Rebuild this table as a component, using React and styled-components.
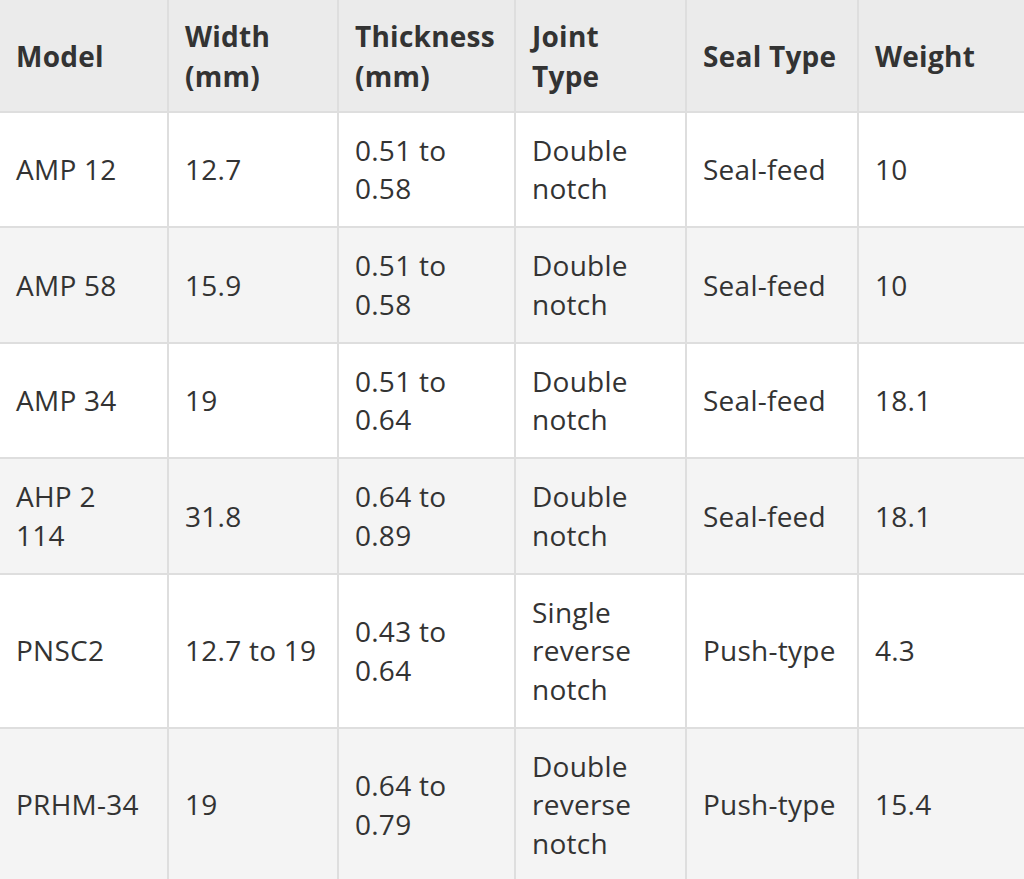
import React from "react";
import styled, { createGlobalStyle } from "styled-components";

const Global = createGlobalStyle`
  html, body { margin: 0; padding: 0; background: #ffffff; }
  body { font-family: "Open Sans", "Liberation Sans", sans-serif; color: #333333; }
`;

const Table = styled.table`
  border-collapse: collapse;
  table-layout: fixed;
  width: 1024px;
  font-size: 28px;
  letter-spacing: 0.25px;
  line-height: 38.5px;
  color: #333333;
`;

const HeadCell = styled.th`
  background: #ebebeb;
  font-weight: 700;
  text-align: left;
  vertical-align: middle;
  line-height: 40px;
  padding: 15.5px 16px 15px;
  border-bottom: 2px solid #dedede;
  border-left: ${(p) => (p.$first ? "none" : "2px solid #dedede")};
`;

const Row = styled.tr`
  background: ${(p) => (p.$striped ? "#f4f4f4" : "#ffffff")};
`;

const Cell = styled.td`
  text-align: left;
  vertical-align: middle;
  padding: 18.25px 16px;
  border-bottom: 2px solid #dedede;
  border-left: ${(p) => (p.$first ? "none" : "2px solid #dedede")};
`;

const widths = [168, 170, 177, 171, 172, 166];
const headers = ["Model", "Width (mm)", "Thickness (mm)", "Joint Type", "Seal Type", "Weight"];
const rows = [
  ["AMP 12", "12.7", "0.51 to 0.58", "Double notch", "Seal-feed", "10"],
  ["AMP 58", "15.9", "0.51 to 0.58", "Double notch", "Seal-feed", "10"],
  ["AMP 34", "19", "0.51 to 0.64", "Double notch", "Seal-feed", "18.1"],
  ["AHP 2 114", "31.8", "0.64 to 0.89", "Double notch", "Seal-feed", "18.1"],
  ["PNSC2", "12.7 to 19", "0.43 to 0.64", "Single reverse notch", "Push-type", "4.3"],
  ["PRHM-34", "19", "0.64 to 0.79", "Double reverse notch", "Push-type", "15.4"],
];

export default function App() {
  return (
    <>
      <Global />
      <Table>
        <colgroup>
          {widths.map((w, i) => (
            <col key={i} style={{ width: w }} />
          ))}
        </colgroup>
        <thead>
          <tr>
            {headers.map((h, i) => (
              <HeadCell key={h} $first={i === 0}>{h}</HeadCell>
            ))}
          </tr>
        </thead>
        <tbody>
          {rows.map((r, ri) => (
            <Row key={ri} $striped={ri % 2 === 1}>
              {r.map((c, ci) => (
                <Cell key={ci} $first={ci === 0}>{c}</Cell>
              ))}
            </Row>
          ))}
        </tbody>
      </Table>
    </>
  );
}
